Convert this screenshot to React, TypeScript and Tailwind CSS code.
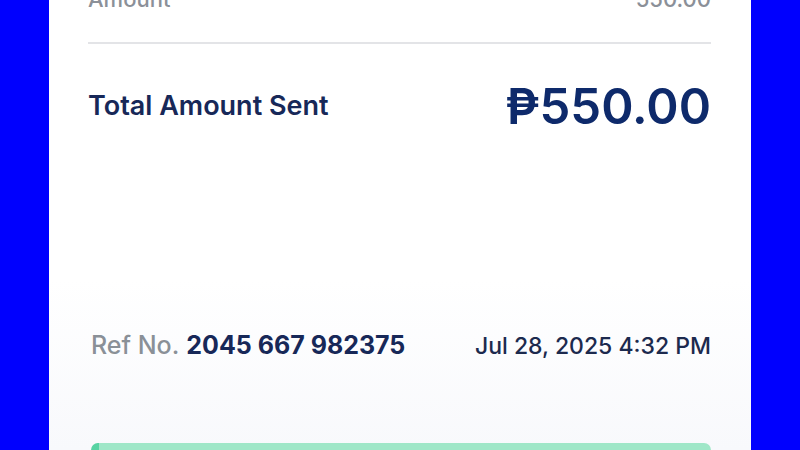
export default function App() {
  return (
    <div className="w-[800px] h-[450px] overflow-hidden bg-[#0000fe] flex justify-center font-['Inter',sans-serif]">
      <div className="w-[702px] h-full bg-white flex flex-col">
        <div className="pl-[39px] pr-10">
          <div className="-mt-[15px] flex justify-between text-[22px] leading-[28px] font-medium text-[#8b9098]">
            <span>Amount</span>
            <span>550.00</span>
          </div>
          <div className="mt-[29px] h-[2px] bg-[#e3e4e7]" />
          <div className="mt-[38px] flex items-center justify-between">
            <span className="text-[27px] font-semibold text-[#172858]">Total Amount Sent</span>
            <span className="text-[49px] leading-none font-semibold text-[#0e2a6b]">₱550.00</span>
          </div>
        </div>
        <div className="mt-auto h-[170px] bg-gradient-to-b from-white to-[#f8f9fc] pl-[42px] pr-10 flex flex-col">
          <div className="mt-[47px] flex items-center justify-between">
            <span className="text-[25px]">
              <span className="font-medium text-[#8a9097]">Ref No.</span>{' '}
              <span className="font-bold text-[#172858]">2045 667 982375</span>
            </span>
            <span className="text-[23px] font-medium text-[#1c2a4e]">Jul 28, 2025 4:32 PM</span>
          </div>
          <div className="mt-auto h-[7px] rounded-t-xl bg-[#9fe7c8] border-l-[8px] border-[#57d3a3]" />
        </div>
      </div>
    </div>
  );
}
